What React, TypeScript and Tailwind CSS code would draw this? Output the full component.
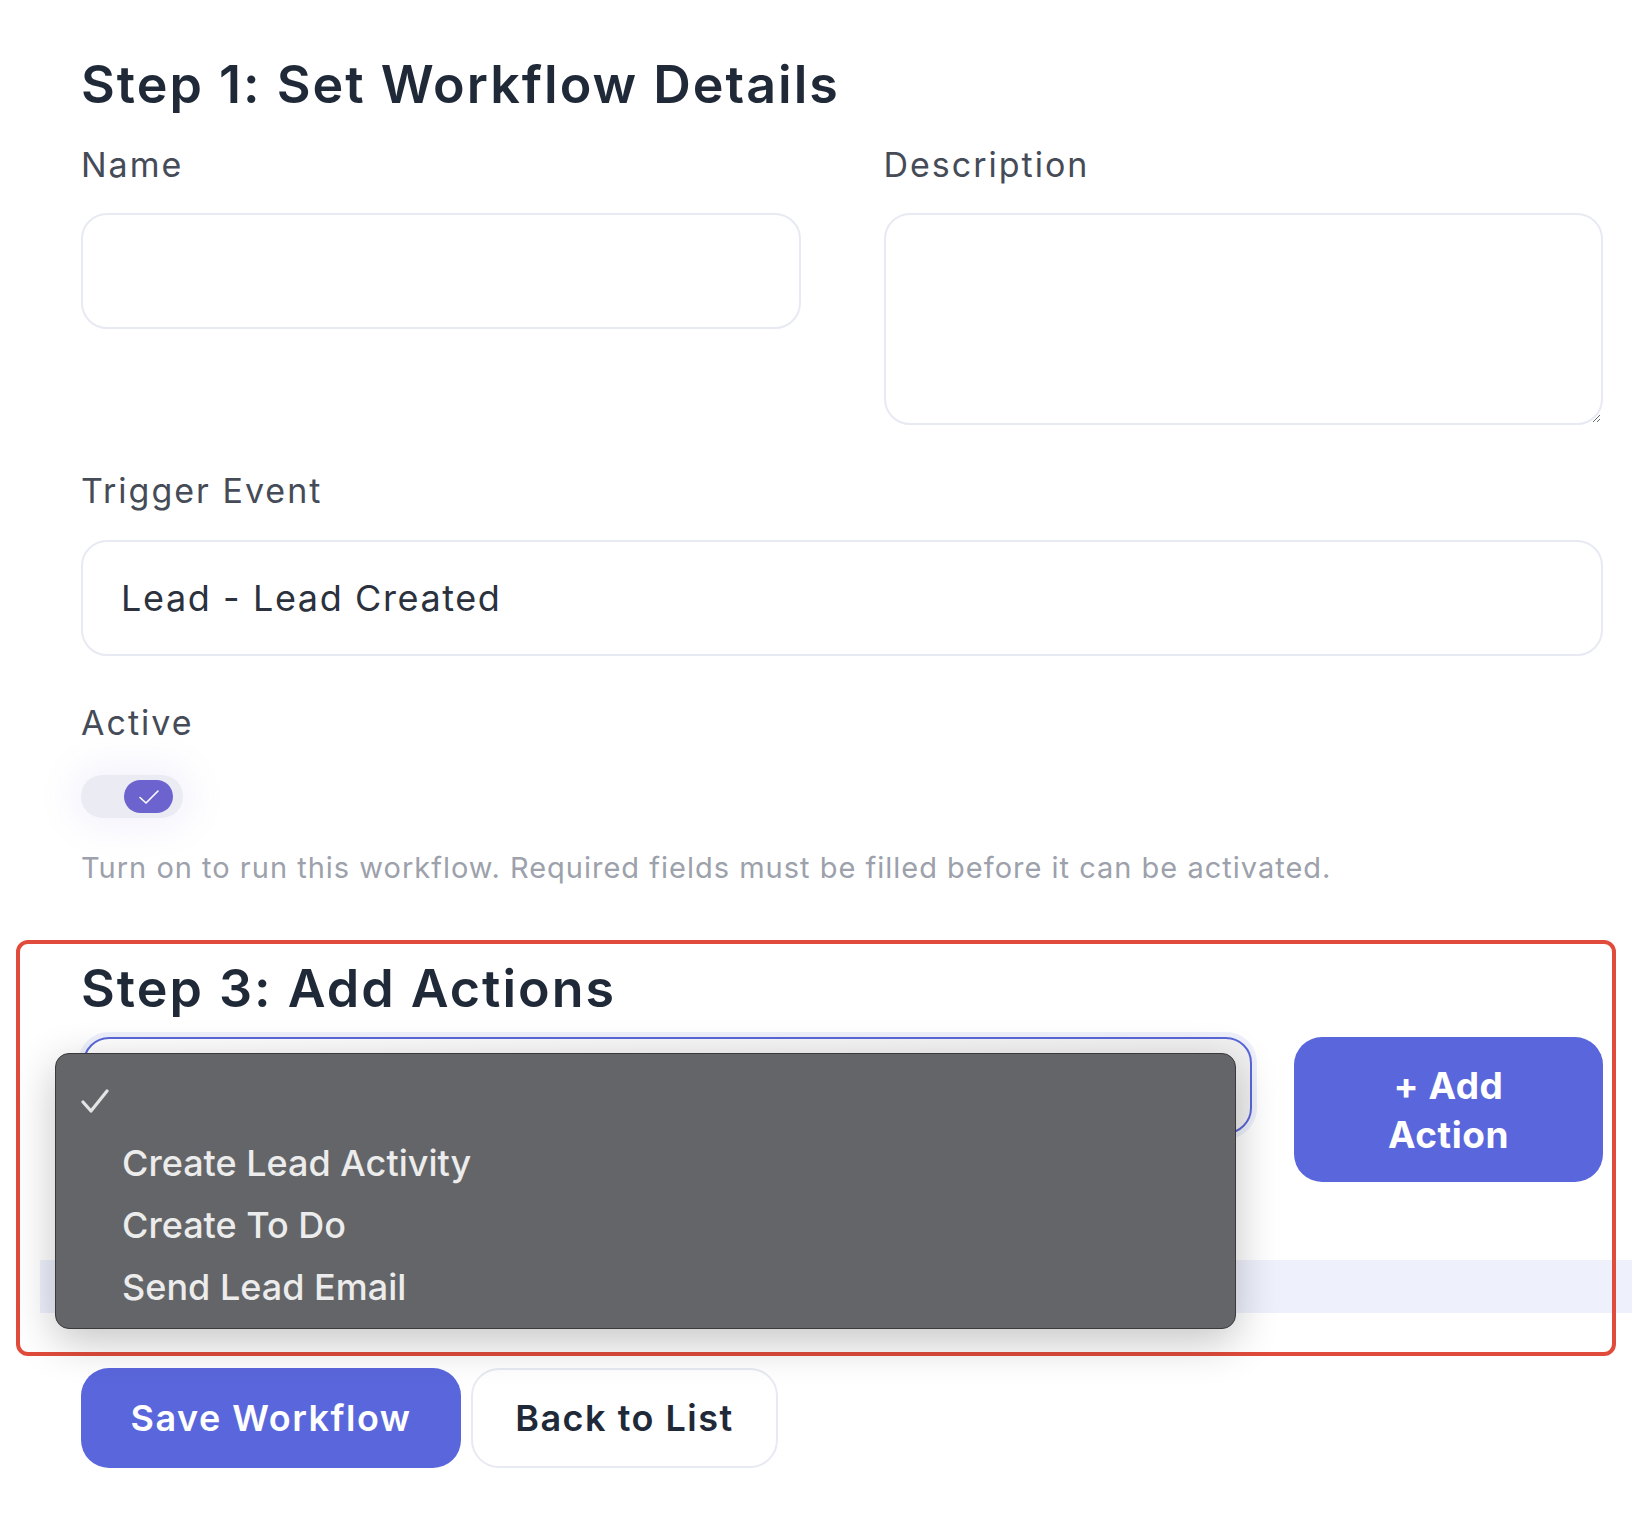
import React from 'react';

const actionOptions = ['Create Lead Activity', 'Create To Do', 'Send Lead Email'];

function Label({ children }: { children: React.ReactNode }) {
  return <label className="block text-[34px] leading-[40px] tracking-[2px] text-[#454b57]">{children}</label>;
}

function ActiveToggle() {
  return (
    <div className="flex h-[43px] w-[102px] items-center justify-end rounded-full bg-[#ebebf3] pr-[10px] shadow-[0_0_36px_10px_rgba(120,110,220,0.09)]">
      <span className="flex h-[33px] w-[49px] items-center justify-center rounded-full bg-[#6c63cf]">
        <svg width="22" height="16" viewBox="0 0 22 16" fill="none">
          <path d="M2 8.5l6 5.5L20 2" stroke="#fff" strokeWidth="1.6" strokeLinecap="round" strokeLinejoin="round" />
        </svg>
      </span>
    </div>
  );
}

function ActionMenu() {
  return (
    <div className="absolute left-[-26px] top-[16px] z-10 h-[276px] w-[1181px] rounded-[14px] border border-[#3a3a3c] bg-[#646568] shadow-[0_12px_44px_rgba(0,0,0,0.24)] font-[family-name:Inter,sans-serif]">
      <div className="flex h-[65px] items-end pl-[25px] pb-[6px]">
        <svg width="28" height="24" viewBox="0 0 28 24" fill="none">
          <path d="M2 13l8 9L26 2" stroke="#e4e4e4" strokeWidth="3.2" strokeLinecap="round" strokeLinejoin="round" />
        </svg>
      </div>
      <ul className="pl-[66px] pt-[13px]">
        {actionOptions.map((option) => (
          <li key={option} className="h-[62px] text-[36px] font-medium leading-[62px] text-[#ececec]">
            {option}
          </li>
        ))}
      </ul>
    </div>
  );
}

export default function App() {
  return (
    <div className="relative min-h-screen bg-white pl-[81px] pr-[29px] pt-[57px] pb-[70px] font-[family-name:Inter,'Noto_Sans',sans-serif]">
      <h2 className="text-[52px] font-semibold leading-[56px] tracking-[2px] text-[#1f2937]">Step 1: Set Workflow Details</h2>

      <div className="mt-[32px] grid grid-cols-2 gap-x-[83px]">
        <div>
          <Label>Name</Label>
          <input className="mt-[28px] h-[116px] w-full rounded-[26px] border-2 border-[#e8eaf3] bg-white px-[38px] text-[33px] outline-none" />
        </div>
        <div>
          <Label>Description</Label>
          <textarea className="mt-[28px] block h-[212px] w-full rounded-[26px] border-2 border-[#e8eaf3] bg-white px-[38px] py-[20px] text-[33px] outline-none" />
        </div>
      </div>

      <div className="mt-[46px]">
        <Label>Trigger Event</Label>
        <div className="mt-[29px] flex h-[116px] items-center rounded-[26px] border-2 border-[#e8eaf3] px-[38px] text-[36px] tracking-[1.6px] text-[#2b313d]">
          Lead - Lead Created
        </div>
      </div>

      <div className="mt-[47px]">
        <Label>Active</Label>
        <div className="mt-[32px]">
          <ActiveToggle />
        </div>
        <p className="mt-[30px] text-[29px] leading-[40px] tracking-[1px] text-[#9ca1ab]">
          Turn on to run this workflow. Required fields must be filled before it can be activated.
        </p>
      </div>

      <section className="mt-[73px]">
        <h2 className="text-[52px] font-semibold leading-[56px] tracking-[2px] text-[#1f2937]">Step 3: Add Actions</h2>
        <div className="relative mt-[20px] flex items-start gap-[42px]">
          <div className="ml-[2px] h-[97px] flex-1 rounded-[26px] border-2 border-[#5a67d8] bg-gradient-to-r from-white to-[#f1f1f1] shadow-[0_0_0_5px_rgba(90,103,216,0.10)]" />
          <button className="flex h-[145px] w-[309px] flex-col items-center justify-center rounded-[28px] bg-[#5a67dc] text-[37px] font-bold leading-[49px] tracking-[0.5px] text-white">
            <span>+ Add</span>
            <span>Action</span>
          </button>
          <ActionMenu />
        </div>
        <div className="-ml-[41px] -mr-[29px] mt-[78px] h-[53px] bg-[#eef1fc]" />
      </section>

      <div className="mt-[55px] flex gap-[10px]">
        <button className="h-[100px] w-[380px] rounded-[28px] bg-[#5a67dc] text-[36px] font-semibold tracking-[1.5px] text-white">Save Workflow</button>
        <button className="h-[100px] w-[307px] rounded-[28px] border-2 border-[#e8eaf3] bg-white text-[36px] font-semibold tracking-[1.5px] text-[#1f2937]">Back to List</button>
      </div>

      <div className="pointer-events-none absolute left-[16px] top-[940px] h-[416px] w-[1600px] rounded-[12px] border-4 border-[#e04b3b]" />
    </div>
  );
}
